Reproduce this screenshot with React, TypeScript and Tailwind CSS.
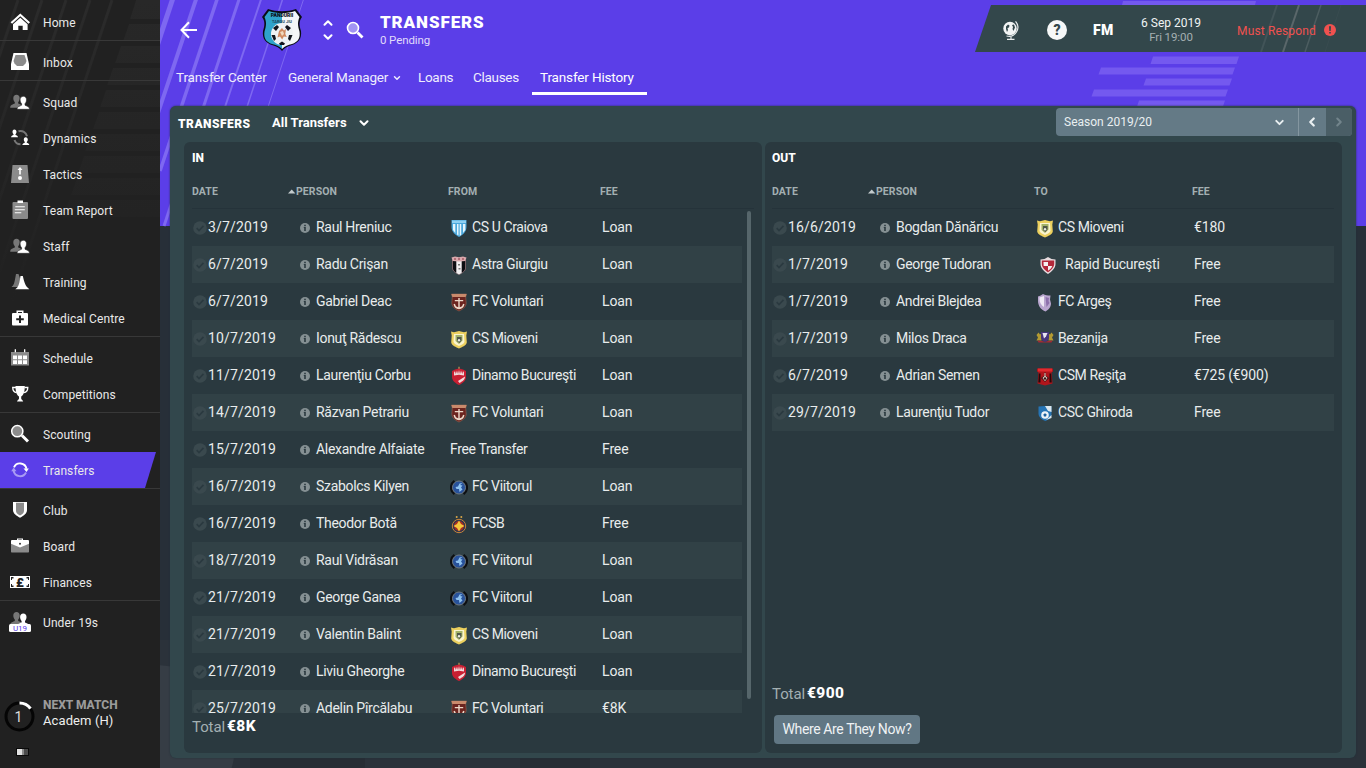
import type { ReactNode } from 'react'
import clsx from 'clsx'
import { ChevronDown, ChevronLeft, ChevronRight, ChevronUp } from 'lucide-react'

// ---------- types ----------

interface NavItem {
  label: string
  icon: ReactNode
  active?: boolean
}

interface Transfer {
  date: string
  person: string
  club: string
  crest?: ReactNode
  indent?: boolean
  fee: string
}

// ---------- sidebar icons ----------

const Icon = ({ children }: { children: ReactNode }) => (
  <svg width="24" height="24" viewBox="0 0 24 24" fill="#fff" className="shrink-0">
    {children}
  </svg>
)

const person = (x: number, y: number) =>
  `M${x} ${y}c2 0 3.2 1.500 3.200 3.500c0 1.900-.7 3.100-1.500 3.900v1.500c1.500.9 4.600 1.200 4.600 4.100h-12.600c0-2.900 3.100-3.200 4.600-4.100v-1.500c-.8-.8-1.500-2-1.500-3.900c0-2 1.200-3.500 3.200-3.500z`

const SquadIcon = () => (
  <Icon>
    <path d={person(8.500, 4.700)} fill="#777" />
    <path d={person(15.300, 6.300)} stroke="#212121" strokeWidth=".6" />
  </Icon>
)

const ICONS = {
  home: (
    <Icon>
      <path d="M12.300 3.500L22 12.300l-1.500 1.400-8.200-7.400-8.200 7.400-1.500-1.400z" />
      <path d="M12.300 7.700l7.300 6.500V20h-4.900v-4.300h-4.400V20H5v-5.800z" />
    </Icon>
  ),
  inbox: (
    <Icon>
      <path d="M5.500 3h13l2.500 11v6H3v-6z" />
      <path d="M7.500 5h9L18.500 11l-1 2.500L15 16H9l-2.500-2.500-1-2.500z" fill="#8b8b8b" />
    </Icon>
  ),
  dynamics: (
    <Icon>
      <path d="M10.500 5.300c4-1 7.500 1 8.500 5M6.500 14c.8 2.600 3 4.300 6 4.300" fill="none" stroke="#777" strokeWidth="2" />
      <path d="M6.300 3.500c1.500 0 2.200 1 2.200 2.300 0 1.200-.5 1.900-1 2.400v.8c1 .5 2.500.8 2.500 2.300H3c0-1.500 1.500-1.800 2.500-2.300v-.8c-.5-.5-1-1.200-1-2.400 0-1.300.6-2.300 1.800-2.300zM17.600 11.300c1.500 0 2.200 1 2.200 2.300 0 1.200-.5 1.900-1 2.400v.8c1 .5 2.500.8 2.500 2.300h-7c0-1.500 1.500-1.800 2.500-2.300V16c-.5-.5-1-1.200-1-2.400 0-1.300.6-2.300 1.800-2.300z" />
    </Icon>
  ),
  tactics: (
    <Icon>
      <path d="M4.500 3h15l1.500 18H3z" fill="#8b8b8b" />
      <path d="M12 5l2.500 3h-1.700v4.500h-1.600V8H9.500z" />
      <circle cx="12" cy="16" r="2" />
    </Icon>
  ),
  report: (
    <Icon>
      <rect x="4.500" y="4" width="15.500" height="17" rx="1" fill="#8b8b8b" />
      <path d="M9.500 2.500h5.500V5H9.500zM7.300 8.300h9.500v1H7.300zM6.800 11.300h10v1h-10zM6.800 14.300h6.500v1H6.800z" />
    </Icon>
  ),
  training: (
    <Icon>
      <path d="M8 4h2.500L15 17H3.500l1.500-1.500c1.500-2 2-6 3-11.500z" fill="#777" />
      <path d="M12.500 6h2.300c1 4 2 9 4.700 11.500l1.800 1.700H7.300l2-1.700c2-2.500 2.500-7 3.200-11.500z" />
    </Icon>
  ),
  medical: (
    <Icon>
      <path d="M8.500 7V4.500h7V7h3.200c.8 0 1.300.5 1.300 1.300v10c0 .8-.5 1.300-1.300 1.300H5.300c-.8 0-1.300-.5-1.300-1.300v-10C4 7.500 4.500 7 5.300 7zm1.500 0h4V6h-4z" fillRule="evenodd" />
      <path d="M11 9.500h2v2.800h2.800v2H13V17h-2v-2.700H8.200v-2H11z" fill="#212121" />
    </Icon>
  ),
  schedule: (
    <Icon>
      <path d="M3 6h18v13.500H3z" fill="#8b8b8b" />
      <path d="M6.700 3.300h1.300v3H6.700zM16 3.300h1.300v3H16zM5 9.500h4v3.700H5zM10 9.500h4v3.700h-4zM15 9.500h4v3.700h-4zM5 14.200h4V18H5zM10 14.200h4V18h-4zM15 14.200h4V18h-4z" />
    </Icon>
  ),
  trophy: (
    <Icon>
      <path d="M7.500 4h9.300c0 6.500-1.500 9-3.600 10.500v2c0 1 1.500 1.300 2 3H9c.5-1.700 2-2 2-3v-2C9 13 7.500 10.500 7.500 4z" />
      <path d="M8 5.500H4.700c0 3 1.300 4.700 4 5.200M16.500 5.500h3.300c0 3-1.300 4.700-4 5.200" fill="none" stroke="#fff" strokeWidth="1.300" />
    </Icon>
  ),
  scouting: (
    <Icon>
      <circle cx="9.300" cy="9.200" r="5.600" fill="#8b8b8b" stroke="#fff" strokeWidth="1.500" />
      <path d="M14 13.500l6 6" stroke="#fff" strokeWidth="3" />
    </Icon>
  ),
  transfers: (
    <Icon>
      <path d="M6 9.300a6.600 6.600 0 0 1 12.500 1.500" fill="none" stroke="#fff" strokeWidth="1.900" />
      <path d="M15.500 10.500h5.300l-2.300 3.500z" />
      <path d="M18 14.500a6.600 6.600 0 0 1-12.400-1.700" fill="none" stroke="#a99bf4" strokeWidth="1.900" />
      <path d="M3.200 13.200h5.300L5.700 9.600z" fill="#a99bf4" />
    </Icon>
  ),
  club: (
    <Icon>
      <path d="M5 4h14v8c0 3.500-3 5.500-7 7.700C8 17.500 5 15.500 5 12z" />
      <path d="M8 4.800h8V13c0 2-1.500 3-4 4.600C9.500 16 8 15 8 13z" fill="#8b8b8b" />
    </Icon>
  ),
  board: (
    <Icon>
      <path d="M3 9h18v8.500c0 .6-.4 1-1 1H4c-.6 0-1-.4-1-1z" fill="#8b8b8b" />
      <path d="M9 6V4.500h6V6h4.800c.7 0 1.200.5 1.200 1.200v2.600L12 13.500 3 9.800V7.200C3 6.500 3.500 6 4.200 6zm1.200 0h3.600v-.5h-3.600z" fillRule="evenodd" />
      <circle cx="12" cy="9.800" r="1" fill="#333" />
    </Icon>
  ),
  finances: (
    <Icon>
      <path d="M2 6h20v12H2z" />
      <path d="M3 7h2.500v1.500H4V10H3zM21 7h-2.500v1.500H20V10h1zM3 17h2.500v-1.500H4V14H3zM21 17h-2.500v-1.500H20V14h1z" fill="#212121" />
      <text x="12" y="16.500" textAnchor="middle" fontSize="13" fontWeight="900" fill="#212121">£</text>
    </Icon>
  ),
  under19: (
    <Icon>
      <path d={person(8.500, 2)} fill="#777" />
      <path d={person(15.300, 3.500)} />
      <rect x="1" y="14" width="22" height="8" rx="1.500" />
      <text x="12" y="20.800" textAnchor="middle" fontSize="8" fill="#5b3ee8">U19</text>
    </Icon>
  ),
}

const NAV_GROUPS: NavItem[][] = [
  [{ label: 'Home', icon: ICONS.home }],
  [{ label: 'Inbox', icon: ICONS.inbox }],
  [
    { label: 'Squad', icon: <SquadIcon /> },
    { label: 'Dynamics', icon: ICONS.dynamics },
    { label: 'Tactics', icon: ICONS.tactics },
    { label: 'Team Report', icon: ICONS.report },
    { label: 'Staff', icon: <SquadIcon /> },
    { label: 'Training', icon: ICONS.training },
    { label: 'Medical Centre', icon: ICONS.medical },
  ],
  [
    { label: 'Schedule', icon: ICONS.schedule },
    { label: 'Competitions', icon: ICONS.trophy },
  ],
  [
    { label: 'Scouting', icon: ICONS.scouting },
    { label: 'Transfers', icon: ICONS.transfers, active: true },
  ],
  [
    { label: 'Club', icon: ICONS.club },
    { label: 'Board', icon: ICONS.board },
    { label: 'Finances', icon: ICONS.finances },
  ],
  [{ label: 'Under 19s', icon: ICONS.under19 }],
]

// ---------- club crests ----------

const Crest = ({ children }: { children: ReactNode }) => (
  <svg width="18" height="20" viewBox="0 0 18 20">
    {children}
  </svg>
)

const CREST = {
  craiova: (
    <Crest>
      <path d="M1.500 2h15v7c0 5-4 8-7.500 10C5.500 17 1.500 14 1.500 9z" fill="#4ba8dc" />
      <path d="M3 6h2.300v9L3 12zM7 6h1.500v11.500L7 16.500zM9.700 6h1.500v11l-1.500.7zM13 6h2.300v6L13 15z" fill="#e6f5fc" />
      <path d="M2 2.500h14v2.500H2z" fill="#8fd0f2" />
    </Crest>
  ),
  astra: (
    <Crest>
      <path d="M2.500 5h13v9c-1 3-4.500 4.500-6.500 5.500-2-1-5.500-2.500-6.500-5.500z" fill="#0d0d12" stroke="#b58a90" strokeWidth=".6" />
      <path d="M6.300 6h5.400v12L9 19.500 6.300 18z" fill="#f1eef0" />
      <path d="M1.500 2.500L5 1.500l4 .7 4-.7 3.500 1-1.200 3.500L9 6.500 2.700 6z" fill="#d9a9ad" />
      <path d="M4 3.500h2v1H4zM8 3.500h2v1H8zM12 3.500h2v1h-2z" fill="#8c3340" />
      <path d="M8 9h2v1.500H8zM8.500 13h2v1.500h-2z" fill="#777" />
    </Crest>
  ),
  voluntari: (
    <Crest>
      <path d="M1.500 2h15l-.8 3 .5 6c0 4-4 6.500-7.200 8-3.200-1.500-7.200-4-7.200-8l.5-6z" fill="#6b241f" stroke="#a5705a" strokeWidth=".5" />
      <path d="M1.500 2h15l-.8 3H2.300z" fill="#c98a6c" />
      <path d="M8.300 6h1.400v2h3.500v1.200H9.700v6c2-.3 3-1.500 3.300-3.500l1.500.5c-.5 3-2.500 4.500-5.500 5-3-.5-5-2-5.500-5l1.500-.5c.3 2 1.300 3.200 3.300 3.500v-6H4.800V8h3.500z" fill="#edd9c9" />
    </Crest>
  ),
  mioveni: (
    <Crest>
      <path d="M1 2.500l3 .7L9 2l5 1.200 3-.7-.7 4 .5 7C16 17 12 18 9 19.500 6 18 2 17 1.200 13.500l.5-7z" fill="#ecd05e" />
      <path d="M4 5h10l.5 8c-1 2.500-3.500 3-5.500 4-2-1-4.500-1.500-5.500-4z" fill="#faf4cf" />
      <path d="M5.500 6h7v5.500L9 15l-3.500-3z" fill="#a3b268" />
      <path d="M7 8h4.500v3.500L9.500 14 7 12z" fill="#505749" />
      <circle cx="9" cy="11.300" r="1.200" fill="#e9ecdf" />
    </Crest>
  ),
  dinamo: (
    <Crest>
      <path d="M2 5l3-1.500L9 2.500l4 1L16 5v6c0 4-4 6.500-7 8-3-1.500-7-4-7-8z" fill="#c91f32" />
      <path d="M4 6.500l1-1.500.8 3L7 4.500 8 8l1-4 1 4 1-3.500L12.300 8l.7-3 1 1.500v3L9 8.700 4 9.500zM8 15l7-4.500c0 3.500-3 5-5.500 6.500z" fill="#f2d9da" />
      <path d="M8.500.8h1v2h-1z" fill="#d9b15c" />
    </Crest>
  ),
  viitorul: (
    <Crest>
      <path d="M4.500 4A8 8 0 0 0 4.500 17M13.500 4a8 8 0 0 1 0 13" fill="none" stroke="#0d0f12" strokeWidth="2.500" />
      <circle cx="9" cy="10.500" r="6.500" fill="#28529b" stroke="#6f7880" strokeWidth="1" />
      <path d="M9.500 6.500l3-.5-2.500 2 2.500.5-1.500 2 1.500 2-3 2.500-.5-3H6.500l-1-2 2.500-.5z" fill="#8fc2ef" />
    </Crest>
  ),
  fcsb: (
    <Crest>
      <circle cx="9" cy="12" r="6.700" fill="#27334f" stroke="#c9843a" strokeWidth="1" />
      <circle cx="9" cy="12" r="5" fill="#a52e25" />
      <path d="M9 6.500l2 3.500 3.500 2-3.500 2-2 3.500L7 14l-3.500-2L7 10z" fill="#f4c53b" />
      <circle cx="6.700" cy="3" r="1" fill="#d8a848" />
      <circle cx="11.300" cy="3" r="1" fill="#d8a848" />
    </Crest>
  ),
  rapid: (
    <Crest>
      <path d="M1.500 4.500l4-.5L9 2l3.500 2 4 .5v4.500c0 4-3.500 7.500-7.500 10-4-2.500-7.500-6-7.500-10z" fill="#e9dcdf" />
      <path d="M2.800 5.500h12.400V9c0 3-2.900 6-6.200 8.300C5.700 15 2.800 12 2.800 9z" fill="#b3283a" />
      <path d="M4.500 7H9v4H4.700zM9 11h4.300c-.8 2-2.300 3.500-4.300 4.700z" fill="#f5eff0" />
    </Crest>
  ),
  arges: (
    <Crest>
      <path d="M2 4.500C4 4 5.500 3 7 2c2 1 4.500 1.500 7.500 1.500l-.5 4 1 4c0 3.500-2.500 6.500-5.500 8C5 18 2 13.500 2 9z" fill="#b9a6cf" />
      <path d="M3.500 5.500L8 4V15c-3-2-4.500-4.500-4.500-8z" fill="#efeaf5" />
      <path d="M9.500 5l3.500 1-.5 3 1 2-3 4z" fill="#8d70ac" />
    </Crest>
  ),
  bezanija: (
    <Crest>
      <path d="M.5 6l2-2.500 1.500 2L5.500 4.500v7H.5l1.500-3zM17.500 6l-2-2.500-1.500 2-1.500-1v7h5l-1.500-3z" fill="#b39a32" />
      <path d="M5 3h8v5.500c0 2-2 3.500-4 4.500-2-1-4-2.500-4-4.500z" fill="#47357c" />
      <path d="M6.500 4h5L10 7.500 8 9.500z" fill="#e9e5f2" />
      <path d="M1.500 11.500l4.500.5 3 1 3-1 4.500-.5-1 2H2.500z" fill="#a42a35" />
    </Crest>
  ),
  resita: (
    <Crest>
      <path d="M1 2.500h16v3l-1.500 1 1 11L9 19.500 1.500 17.500l1-11-1.500-1z" fill="#b0151b" />
      <path d="M2 2.500h14v3H2z" fill="#e22a2e" />
      <path d="M2.800 7.500h1.700v9H2.300zM13.500 7.500h1.700l.5 9h-2.200z" fill="#26090b" />
      <path d="M8.500 6.500h1v3L13 12l-4 4-4-4 3.500-2.500z" fill="#331012" />
      <path d="M8.500 7h1v3l2 2-2.500 3.300L6.500 12l2-2z" fill="#e8cfc3" />
      <circle cx="9" cy="12.500" r="1.200" fill="#331012" />
    </Crest>
  ),
  ghiroda: (
    <Crest>
      <path d="M2.500 3.500L9 3l6.500.5V11c0 4-3 5.500-6 7C5.500 16.500 2.500 14 2.500 10.500z" fill="#2674b4" />
      <path d="M9 3h6.500v6L12 8zM10 17l5.500-5v3z" fill="#dce7ee" />
      <circle cx="9" cy="12" r="3.800" fill="#eef4f8" />
      <path d="M9 10.200l1.700 1.300-.7 2H8l-.7-2z" fill="#1c5f9c" />
    </Crest>
  ),
}

// ---------- data ----------

const TRANSFERS_IN: Transfer[] = [
  { date: '3/7/2019', person: 'Raul Hreniuc', club: 'CS U Craiova', crest: CREST.craiova, fee: 'Loan' },
  { date: '6/7/2019', person: 'Radu Crişan', club: 'Astra Giurgiu', crest: CREST.astra, fee: 'Loan' },
  { date: '6/7/2019', person: 'Gabriel Deac', club: 'FC Voluntari', crest: CREST.voluntari, fee: 'Loan' },
  { date: '10/7/2019', person: 'Ionuţ Rădescu', club: 'CS Mioveni', crest: CREST.mioveni, fee: 'Loan' },
  { date: '11/7/2019', person: 'Laurenţiu Corbu', club: 'Dinamo Bucureşti', crest: CREST.dinamo, fee: 'Loan' },
  { date: '14/7/2019', person: 'Răzvan Petrariu', club: 'FC Voluntari', crest: CREST.voluntari, fee: 'Loan' },
  { date: '15/7/2019', person: 'Alexandre Alfaiate', club: 'Free Transfer', fee: 'Free' },
  { date: '16/7/2019', person: 'Szabolcs Kilyen', club: 'FC Viitorul', crest: CREST.viitorul, fee: 'Loan' },
  { date: '16/7/2019', person: 'Theodor Botă', club: 'FCSB', crest: CREST.fcsb, fee: 'Free' },
  { date: '18/7/2019', person: 'Raul Vidrăsan', club: 'FC Viitorul', crest: CREST.viitorul, fee: 'Loan' },
  { date: '21/7/2019', person: 'George Ganea', club: 'FC Viitorul', crest: CREST.viitorul, fee: 'Loan' },
  { date: '21/7/2019', person: 'Valentin Balint', club: 'CS Mioveni', crest: CREST.mioveni, fee: 'Loan' },
  { date: '21/7/2019', person: 'Liviu Gheorghe', club: 'Dinamo Bucureşti', crest: CREST.dinamo, fee: 'Loan' },
  { date: '25/7/2019', person: 'Adelin Pîrcălabu', club: 'FC Voluntari', crest: CREST.voluntari, fee: '€8K' },
]

const TRANSFERS_OUT: Transfer[] = [
  { date: '16/6/2019', person: 'Bogdan Dănăricu', club: 'CS Mioveni', crest: CREST.mioveni, fee: '€180' },
  { date: '1/7/2019', person: 'George Tudoran', club: 'Rapid Bucureşti', crest: CREST.rapid, indent: true, fee: 'Free' },
  { date: '1/7/2019', person: 'Andrei Blejdea', club: 'FC Argeş', crest: CREST.arges, fee: 'Free' },
  { date: '1/7/2019', person: 'Milos Draca', club: 'Bezanija', crest: CREST.bezanija, fee: 'Free' },
  { date: '6/7/2019', person: 'Adrian Semen', club: 'CSM Reşiţa', crest: CREST.resita, fee: '€725 (€900)' },
  { date: '29/7/2019', person: 'Laurenţiu Tudor', club: 'CSC Ghiroda', crest: CREST.ghiroda, fee: 'Free' },
]

// ---------- sidebar ----------

const Sidebar = () => (
  <aside className="grid h-[768px] w-40 shrink-0 overflow-hidden bg-[#212121]">
    <svg width="160" height="768" className="col-start-1 row-start-1">
      <defs>
        <linearGradient id="fade" x1="0" y1="0" x2="0" y2="1">
          <stop offset="0" stopColor="#212121" stopOpacity="0" />
          <stop offset="1" stopColor="#212121" />
        </linearGradient>
      </defs>
      <path d="M18 0L-40 174M42 0L-58 300M66 0L-34 300M90 0L-10 300M112 0L12 300" stroke="#2b2b2b" strokeWidth="3" />
      <path d="M136 0h24v19h-30zM129 24h31v17h-37zM121 46h39v17h-45zM113 68h47v17h-53zM106 90h54v17h-60zM99 112h61v17H93zM91 134h69v17H85zM84 156h76v17H78zM77 178h83v17H71zM69 200h91v17H63z" fill="#282828" />
      <rect width="160" height="300" fill="url(#fade)" />
    </svg>
    <div className="col-start-1 row-start-1 flex flex-col pt-[4px]">
      {NAV_GROUPS.map((group, i) => (
        <div
          key={i}
          className={clsx('mb-[3px]', i < NAV_GROUPS.length - 1 && 'border-b border-[#383838]')}
        >
          {group.map(item => (
            <div
              key={item.label}
              className={clsx(
                'flex h-9 w-[156px] items-center gap-[11px] pl-2',
                item.active && 'bg-[#5b3ee8] [clip-path:polygon(0_0,100%_0,145px_100%,0_100%)]'
              )}
            >
              {item.icon}
              <span className="pt-[2px] text-[12px] leading-[16px] tracking-[0.1px] text-[#e9e9e9]">{item.label}</span>
            </div>
          ))}
        </div>
      ))}
      <div className="mt-auto flex items-start gap-2 pl-1">
        <svg width="31" height="31" viewBox="0 0 31 31">
          <circle cx="15.500" cy="15.500" r="13.500" fill="none" stroke="#050505" strokeWidth="3" />
          <path d="M15.500 2a13.500 13.500 0 0 1 11 5.700" fill="none" stroke="#fff" strokeWidth="3" />
          <text x="14.500" y="20.500" textAnchor="middle" fontSize="14" fill="#ddd">1</text>
        </svg>
        <div className="-mt-[3px] flex flex-col text-[13px] leading-[15px]">
          <span className="text-[12px] font-extrabold text-[#9b9b9b]">NEXT MATCH</span>
          <span className="tracking-[0.1px] text-[#eee]">Academ (H)</span>
        </div>
      </div>
      <div className="mt-4 mb-[12px] ml-4 flex h-2 w-[13px] border border-[#0a0a0a] bg-[#4b4b4b]">
        <div className="w-[5px] bg-[#e2e2e2]" />
        <div className="w-[2px] bg-[#8c8c8c]" />
      </div>
    </div>
  </aside>
)

// ---------- header ----------

const Backdrop = () => (
  <svg width="1206" height="768" className="col-start-1 row-start-1">
    <rect width="1206" height="768" fill="#272f38" />
    <rect y="640" width="1206" height="128" fill="#2b323a" />
    <circle cx="-5" cy="745" r="80" fill="#363d45" />
    <path d="M90 757h115v11H90zM360 757h70v11h-70z" fill="#272d34" />
    <rect width="1206" height="226" fill="#5b3ee8" />
    <g stroke="#7e68f1">
      <path d="M13 -2L-12 73" strokeWidth="5" />
      <path d="M36.500 -2L-5 122" strokeWidth="4" />
      <path d="M57.500 -2L0 171" strokeWidth="3.500" />
      <path d="M79.500 -2L4 226" strokeWidth="3" />
      <path d="M101.500 -2L64 110" strokeWidth="2" />
      <path d="M123 -2L86 110" strokeWidth="1.500" />
      <path d="M144 -2L107 110" strokeWidth="1" />
    </g>
    <g fill="#7459ef">
      <path d="M963 1h133l-1 4H962zM993 56.500h86l-2.500 7.500h-86zM941 67.500h134l-2.500 7h-134zM986 78.500h86l-2.500 7h-86zM934 89.500h134l-2.500 7H931.500zM979 100.500h86l-2 6h-86z" />
    </g>
  </svg>
)

const TeamCrest = () => (
  <svg width="42" height="46" viewBox="0 0 42 46">
    <path d="M7 2c9 3 19 3 28 0l6 8c-3 4-3 8-1 14 1 8-3 12-9 14-4 1-8 3-10 6-2-3-6-5-10-6-6-2-10-6-9-14 2-6 2-10-1-14z" fill="#0a0d16" />
    <path d="M8 4c4 1.500 8 2 13 2V42c-3-3-6-4-10-5-6-2-8.500-6-7.500-12.500C5.500 18 5.500 15 3.500 10z" fill="#2fa3cc" />
    <path d="M34 4c-4 1.500-8 2-13 2V42c3-3 6-4 10-5 6-2 8.500-6 7.500-12.500C36.500 18 36.500 15 38.500 10z" fill="#f4f6f8" />
    <circle cx="21" cy="27" r="11" fill="#eef2f4" />
    <path d="M12 21l4-3 2 2-3 4zM30 21l-4-3-2 2 3 4zM10.500 28h3.500l1 4-2 2zM31.500 28H28l-1 4 2 2zM18 36.500l3-2 3 2-1 1.500h-4z" fill="#12151c" />
    <path d="M18 24l3-3 2 2.500 2-1.500-.7 5 1.500 3-3-.5-1.600 3-2.200-3-2.500 1z" fill="#cf8a60" />
    <path d="M19 25l3-1 1 3-2 2z" fill="#f0d9bd" />
    <text x="21" y="9.500" textAnchor="middle" fontSize="5" fontWeight="900" fill="#0a0d16">PANDURII</text>
    <text x="21" y="15.500" textAnchor="middle" fontSize="4" fontWeight="700" fill="#20475c">TARGU JIU</text>
  </svg>
)

const StatusBar = () => (
  <div className="mt-[5px] grid h-[47px] w-[391px] bg-[#33474b] [clip-path:polygon(16px_0,100%_0,100%_100%,0_100%)]">
    <svg width="391" height="47" className="col-start-1 row-start-1" stroke="#425458">
      <path d="M302 0l-16 47" strokeWidth="2" />
      <path d="M324 0l-16 47" strokeWidth="2" stroke="#5a676a" />
      <path d="M346 0l-16 47" strokeWidth="1.500" stroke="#4c5d60" />
      <path d="M366 0l-16 47" strokeWidth="1" stroke="#394c50" />
    </svg>
    <div className="col-start-1 row-start-1 flex items-center pt-[3px] pl-[26px]">
      <svg width="20" height="22" viewBox="0 0 20 22">
        <circle cx="9" cy="9.500" r="6.700" fill="#f3f5f5" />
        <path d="M5 7.500l2-2 1.500 1-.5 2-1.500.5L7 11l-1 2-1-3zM11 6l2-.5 1 3-1.500 3.500-1-2 .5-2z" fill="#33474b" />
        <path d="M14.500 2.300a9 9 0 0 1-9 14.700M10 17.500V20M6 20.300h7.500" fill="none" stroke="#e7ebeb" strokeWidth="1.200" />
      </svg>
      <svg width="20" height="20" viewBox="0 0 20 20" className="ml-[26px]">
        <circle cx="10" cy="10" r="10" fill="#f6f8f8" />
        <text x="10" y="15" textAnchor="middle" fontSize="14" fontWeight="900" fill="#33474b">?</text>
      </svg>
      <span className="ml-[26px] w-[21px] pt-px text-[14px] font-black tracking-[0.4px] text-white">FM</span>
      <div className="ml-[22px] flex w-[70px] flex-col items-center text-[11.500px] leading-[14px]">
        <span className="text-[12px] whitespace-nowrap text-[#f0f3f3]">6 Sep 2019</span>
        <span className="tracking-[-0.1px] text-[#a4afb1]">Fri 19:00</span>
      </div>
      <span className="ml-[31px] w-[79px] pt-[2px] text-[12px] tracking-[0.15px] whitespace-nowrap text-[#f0514f]">Must Respond</span>
      <svg width="12" height="12" viewBox="0 0 12 12" className="ml-[8px]">
        <circle cx="6" cy="6" r="6" fill="#f0514f" />
        <path d="M5 2.300h2L6.700 7H5.300zM5.200 8h1.600v1.600H5.200z" fill="#33474b" />
      </svg>
    </div>
  </div>
)

const Header = () => (
  <header className="flex h-[60px] items-start justify-between">
    <div className="flex h-[60px] items-center">
      <svg width="18" height="18" viewBox="0 0 18 18" className="ml-[20px]" fill="none" stroke="#fff" strokeWidth="2">
        <path d="M17 9H2M9 1.300L1.500 9 9 16.700" />
      </svg>
      <div className="ml-[63px]">
        <TeamCrest />
      </div>
      <div className="ml-[18px] flex flex-col text-white">
        <ChevronUp size={14} strokeWidth={3.500} />
        <ChevronDown size={14} strokeWidth={3.500} />
      </div>
      <svg width="18" height="18" viewBox="0 0 18 18" className="ml-[11px]">
        <circle cx="7" cy="7" r="5.500" fill="#a294f3" stroke="#fff" strokeWidth="1.600" />
        <path d="M11.500 11.500l5 5" stroke="#fff" strokeWidth="2.800" />
      </svg>
      <div className="ml-[16px] flex flex-col pt-px">
        <h1 className="text-[17px] leading-[19px] font-black tracking-[0.9px] text-white">TRANSFERS</h1>
        <span className="text-[11.500px] leading-[17px] tracking-[-0.1px] text-[#e0dbfb]">0 Pending</span>
      </div>
    </div>
    <StatusBar />
  </header>
)

const Tabs = () => (
  <nav className="flex h-[35px] items-stretch pl-4 text-[13.500px] tracking-[-0.15px] text-[#efedfd]">
    <span className="flex w-[112px] items-center">Transfer Center</span>
    <span className="flex w-[130px] items-center gap-1">
      General Manager
      <ChevronDown size={10} strokeWidth={3.500} />
    </span>
    <span className="flex w-[55px] items-center tracking-[-0.3px]">Loans</span>
    <span className="flex w-[59px] items-center tracking-[-0.3px]">Clauses</span>
    <span className="flex w-[115px] items-center border-b-[3px] border-white pt-[3px] pl-[8px] text-white">
      Transfer History
    </span>
  </nav>
)

// ---------- tables ----------

const TableHead = ({ cols, place }: { cols: string; place: string }) => (
  <div className={clsx('grid h-[35px] items-center border-b border-[#25333a] pt-[2px] text-[10.500px] font-bold tracking-[0.1px] text-[#a3afb2]', cols)}>
    <span>DATE</span>
    <span className="flex items-center">
      <svg width="8" height="5" viewBox="0 0 8 5" fill="#c3cbcd" className="-mt-[2px]">
        <path d="M0 4.500L3.700.5l3.700 4z" />
      </svg>
      PERSON
    </span>
    <span>{place}</span>
    <span>FEE</span>
  </div>
)

const TransferRow = ({ row, cols, striped }: { row: Transfer; cols: string; striped: boolean }) => (
  <div
    className={clsx(
      'grid h-[37px] shrink-0 items-center text-[14px] tracking-[-0.3px] whitespace-nowrap text-[#e8ecec]',
      cols,
      striped && 'bg-[#314146]'
    )}
  >
    <svg width="14" height="14" viewBox="0 0 14 14" className="ml-px">
      <circle cx="7" cy="7" r="6.800" fill="#3a494e" />
      <path d="M3.700 7.200l2.300 2.300 4.500-4.700" fill="none" stroke="#2b3a40" strokeWidth="1.700" />
    </svg>
    <span className="tracking-[0.15px]">{row.date}</span>
    <svg width="10" height="10" viewBox="0 0 10 10" className="mt-px">
      <circle cx="5" cy="5" r="5" fill="#859093" />
      <path d="M4.200 1.700h1.600v1.500H4.200zM3.800 4h2v4H4.200V5h-.4z" fill="#2b3a40" />
    </svg>
    <span>{row.person}</span>
    {row.crest ? (
      <>
        <span className={clsx(row.indent && 'pl-[3px]')}>{row.crest}</span>
        <span className={row.indent ? 'pl-[7px] tracking-[-0.2px]' : 'tracking-[-0.4px]'}>{row.club}</span>
      </>
    ) : (
      <span className="col-span-2 tracking-[-0.35px]">{row.club}</span>
    )}
    <span className="tracking-[-0.15px]">{row.fee}</span>
  </div>
)

const Total = ({ value }: { value: string }) => (
  <div className="flex h-[26px] items-center gap-px pt-[2px] text-[15px] tracking-[-0.1px] text-[#a3afb2]">
    Total
    <b className="pl-px text-[15.500px] font-extrabold tracking-[0.4px] text-white">{value}</b>
  </div>
)

const InPanel = () => (
  <section className="flex h-[611px] w-[578px] flex-col rounded-md bg-[#2a393f] px-2">
    <h3 className="flex h-8 items-center text-[12px] font-extrabold text-white">IN</h3>
    <TableHead cols="grid-cols-[96px_160px_152px_1fr]" place="FROM" />
    <div className="flex h-[504px] justify-between overflow-hidden pr-[3px]">
      <div className="flex w-[550px] flex-col">
        {TRANSFERS_IN.map((row, i) => (
          <TransferRow key={i} row={row} striped={i % 2 === 1} cols="grid-cols-[16px_92px_16px_134px_22px_130px_1fr]" />
        ))}
      </div>
      <div className="mt-[2px] h-[488px] w-[4px] rounded-full bg-[#56666b]" />
    </div>
    <Total value="€8K" />
  </section>
)

const OutPanel = () => (
  <section className="flex h-[611px] w-[577px] flex-col rounded-md bg-[#2a393f] pr-2 pl-[7px]">
    <h3 className="flex h-8 items-center text-[12px] font-extrabold text-white">OUT</h3>
    <TableHead cols="grid-cols-[96px_166px_158px_1fr]" place="TO" />
    {TRANSFERS_OUT.map((row, i) => (
      <TransferRow key={i} row={row} striped={i % 2 === 1} cols="grid-cols-[16px_92px_16px_140px_22px_136px_1fr]" />
    ))}
    <div className="mt-auto mb-[9px] flex flex-col items-start gap-[9px]">
      <Total value="€900" />
      <button className="ml-[2px] h-[29px] w-[146px] rounded bg-[#617784] text-[14px] tracking-[-0.38px] whitespace-nowrap text-[#eef2f4]">
        Where Are They Now?
      </button>
    </div>
  </section>
)

const SeasonPicker = () => (
  <div className="mt-[2px] flex h-7 w-[296px] overflow-hidden rounded bg-[#647a86] text-[#e9eff1]">
    <div className="flex w-[243px] items-center justify-between border-r border-[#8496a0] pr-[12px] pl-2 text-[12px]">
      Season 2019/20
      <ChevronDown size={13} strokeWidth={3.500} />
    </div>
    <div className="flex w-[27px] items-center justify-center pr-[2px]">
      <ChevronLeft size={14} strokeWidth={3.800} />
    </div>
    <div className="flex w-[26px] items-center justify-center bg-[#4a5e66] text-[#72848b]">
      <ChevronRight size={14} strokeWidth={3.500} />
    </div>
  </div>
)

export default function App() {
  return (
    <div className="flex h-[768px] w-[1366px] overflow-hidden bg-[#272f38] font-['Roboto','Noto_Sans',sans-serif]">
      <Sidebar />
      <main className="grid h-[768px] w-[1206px] shrink-0">
        <Backdrop />
        <div className="col-start-1 row-start-1 flex flex-col">
          <Header />
          <Tabs />
          <div className="mt-[11px] ml-[10px] h-[652px] w-[1186px] rounded-md bg-[#32474c] shadow-[0_0_2px_#22303a]">
            <div className="flex h-[36px] items-start justify-between pr-1 pl-2">
              <div className="flex h-[34px] items-center text-white">
                <h2 className="w-[94px] pt-[2px] text-[12px] font-black tracking-[0.5px]">TRANSFERS</h2>
                <span className="w-[85px] text-[13px] font-bold">All Transfers</span>
                <ChevronDown size={14} strokeWidth={3.500} />
              </div>
              <SeasonPicker />
            </div>
            <div className="flex gap-[3px] pl-[14px]">
              <InPanel />
              <OutPanel />
            </div>
          </div>
        </div>
      </main>
    </div>
  )
}
